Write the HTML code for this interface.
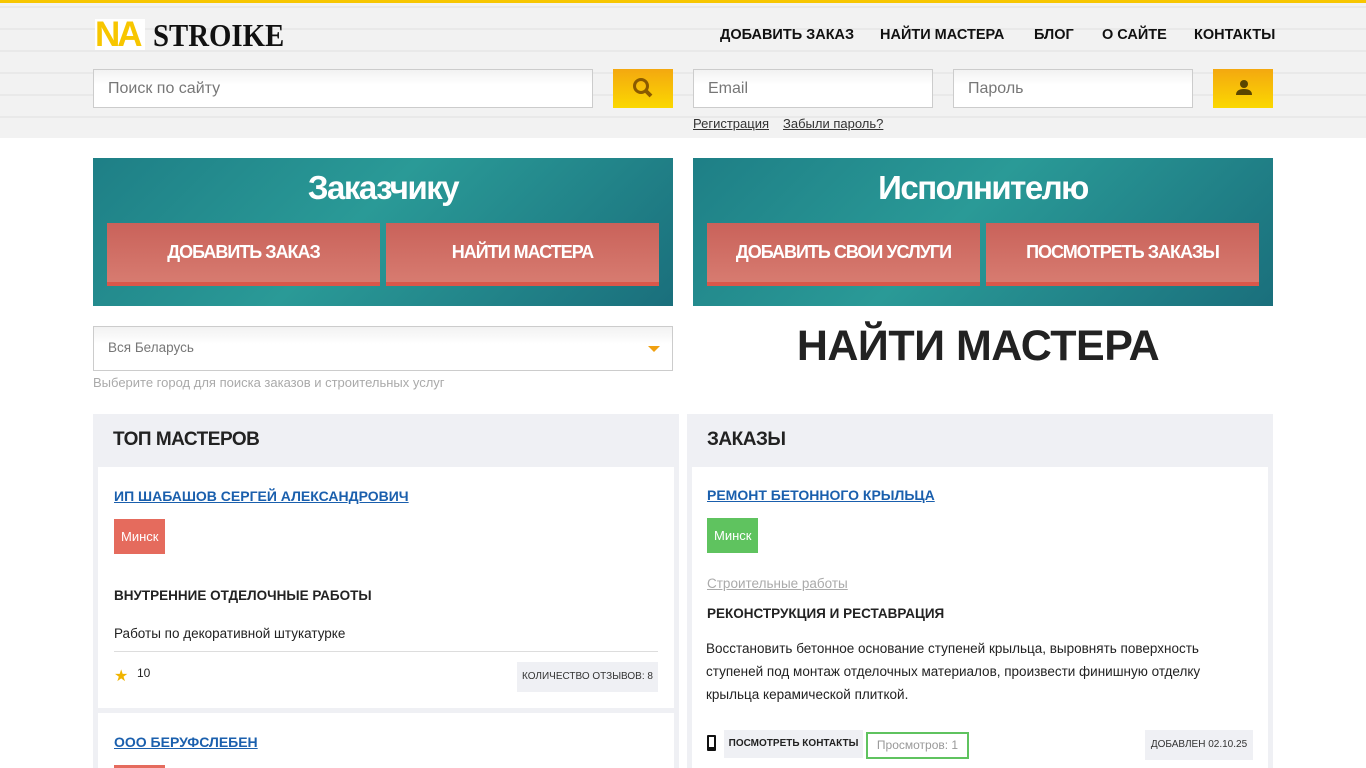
<!DOCTYPE html>
<html><head><meta charset="utf-8"><style>
*{box-sizing:border-box;margin:0;padding:0}
html,body{width:1366px;height:768px;overflow:hidden}
body{background:#fff;font-family:"Liberation Sans",sans-serif;color:#222;position:relative}
.a{position:absolute;white-space:nowrap}
.hdr{left:0;top:0;width:1366px;height:138px;background:#f2f2f2;border-top:3px solid #f7c600;
background-image:repeating-linear-gradient(0deg,transparent 0 20px,#e9e9e9 20px 22px)}
.nav{top:27px;font-size:14.5px;font-weight:bold;color:#111}
.inp{position:absolute;height:39px;border:1px solid #ccc;background:linear-gradient(#f2f2f2,#fff 40%);font-size:16px;color:#777;padding:10px 14px}
.ybtn{position:absolute;height:39px;width:60px;background:linear-gradient(#f4a810,#fbd800)}
.banner{top:158px;width:580px;height:148px;background:linear-gradient(135deg,#1e7f86,#2a9a97 45%,#1a6f7c)}
.banner h2{text-align:center;color:#fff;font-size:33px;font-weight:bold;letter-spacing:-1.5px;margin-top:11px}
.rb{position:absolute;top:65px;height:63px;width:273px;background:linear-gradient(#c9625a,#d77b70);border-bottom:4px solid #d9574a;color:#fff;font-weight:bold;font-size:18px;letter-spacing:-1px;text-align:center;line-height:58px}
.panel{top:414px;background:#eff0f4;height:354px}
.panel h3{font-size:19px;font-weight:bold;letter-spacing:-0.5px;padding:15px 20px;height:53px}
.card{position:absolute;background:#fff;overflow:hidden}
.lnk{color:#1a5fad;font-weight:bold;text-decoration:underline;font-size:14px}
.tag{position:absolute;color:#fff;font-size:13px;padding:0 7px;height:35px;line-height:35px}
.sm{font-size:13.5px}
</style></head><body>
<div class="a hdr"></div>
<div class="a" style="left:95px;top:19px;width:50px;height:31px;background:#fff;color:#f7c600;font:bold 35px 'Liberation Sans',sans-serif;line-height:31px;letter-spacing:-3px">NA</div>
<div class="a" style="left:153px;top:17px;font:bold 32px 'Liberation Serif',serif;color:#111;transform:scaleX(0.9);transform-origin:left">STROIKE</div>
<div class="a nav" style="left:720px">ДОБАВИТЬ ЗАКАЗ</div>
<div class="a nav" style="left:880px">НАЙТИ МАСТЕРА</div>
<div class="a nav" style="left:1034px">БЛОГ</div>
<div class="a nav" style="left:1102px">О САЙТЕ</div>
<div class="a nav" style="left:1194px">КОНТАКТЫ</div>
<div class="inp" style="left:93px;top:69px;width:500px">Поиск по сайту</div>
<div class="ybtn" style="left:613px;top:69px"><svg width="60" height="39"><circle cx="28" cy="17" r="6.5" fill="none" stroke="#8a5a00" stroke-width="3"/><line x1="33" y1="22" x2="38" y2="27" stroke="#8a5a00" stroke-width="4"/></svg></div>
<div class="inp" style="left:693px;top:69px;width:240px">Email</div>
<div class="inp" style="left:953px;top:69px;width:240px">Пароль</div>
<div class="ybtn" style="left:1213px;top:69px"><svg width="60" height="39"><circle cx="31" cy="15" r="4" fill="#5a4500"/><path d="M23 26 Q23 20 31 20 Q39 20 39 26Z" fill="#5a4500"/></svg></div>
<div class="a" style="left:693px;top:116px;font-size:13px;color:#333;text-decoration:underline">Регистрация</div>
<div class="a" style="left:783px;top:116px;font-size:13px;color:#333;text-decoration:underline">Забыли пароль?</div>

<div class="a banner" style="left:93px"><h2>Заказчику</h2>
<div class="rb" style="left:14px">ДОБАВИТЬ ЗАКАЗ</div><div class="rb" style="left:293px">НАЙТИ МАСТЕРА</div></div>
<div class="a banner" style="left:693px"><h2>Исполнителю</h2>
<div class="rb" style="left:14px">ДОБАВИТЬ СВОИ УСЛУГИ</div><div class="rb" style="left:293px">ПОСМОТРЕТЬ ЗАКАЗЫ</div></div>

<div class="inp" style="left:93px;top:326px;width:580px;height:45px;font-size:13.5px;padding:13px 14px;color:#777">Вся Беларусь<span style="position:absolute;right:12px;top:19px;border:6px solid transparent;border-top:6px solid #f0a010;border-bottom:0"></span></div>
<div class="a" style="left:93px;top:375px;font-size:13px;color:#aaa">Выберите город для поиска заказов и строительных услуг</div>
<div class="a" style="left:693px;width:570px;top:322px;text-align:center;font:bold 43px 'Liberation Sans',sans-serif;color:#222;letter-spacing:-0.5px">НАЙТИ МАСТЕРА</div>

<div class="a panel" style="left:93px;width:586px"><h3>ТОП МАСТЕРОВ</h3>
<div class="card" style="left:5px;top:53px;width:576px;height:241px">
<div class="a lnk" style="left:16px;top:21px">ИП ШАБАШОВ СЕРГЕЙ АЛЕКСАНДРОВИЧ</div>
<div class="tag" style="left:16px;top:52px;background:#e56b5d">Минск</div>
<div class="a" style="left:16px;top:121px;font-size:13.5px;font-weight:bold">ВНУТРЕННИЕ ОТДЕЛОЧНЫЕ РАБОТЫ</div>
<div class="a sm" style="left:16px;top:159px">Работы по декоративной штукатурке</div>
<div class="a" style="left:16px;top:184px;width:544px;border-top:1px solid #ddd"></div>
<div class="a" style="left:16px;top:199px;color:#f0b400;font-size:16px">★</div>
<div class="a" style="left:39px;top:199px;font-size:12px">10</div>
<div class="a" style="left:419px;top:195px;width:141px;height:30px;background:#eff0f4;font-size:10px;line-height:30px;text-align:center;color:#333">КОЛИЧЕСТВО ОТЗЫВОВ: 8</div>
</div>
<div class="card" style="left:5px;top:299px;width:576px;height:60px">
<div class="a lnk" style="left:16px;top:21px">ООО БЕРУФСЛЕБЕН</div>
<div class="tag" style="left:16px;top:52px;background:#e56b5d">Минск</div></div>
</div>

<div class="a panel" style="left:687px;width:586px"><h3>ЗАКАЗЫ</h3>
<div class="card" style="left:5px;top:53px;width:576px;height:320px">
<div class="a lnk" style="left:15px;top:20px">РЕМОНТ БЕТОННОГО КРЫЛЬЦА</div>
<div class="tag" style="left:15px;top:51px;background:#5fc35f">Минск</div>
<div class="a sm" style="left:15px;top:109px;color:#aaa;text-decoration:underline">Строительные работы</div>
<div class="a" style="left:15px;top:139px;font-size:13.5px;font-weight:bold">РЕКОНСТРУКЦИЯ И РЕСТАВРАЦИЯ</div>
<div class="a sm" style="left:14px;top:170px;width:525px;line-height:23px;white-space:normal">Восстановить бетонное основание ступеней крыльца, выровнять поверхность ступеней под монтаж отделочных материалов, произвести финишную отделку крыльца керамической плиткой.</div>
<div class="a" style="left:15px;top:268px;width:9px;height:16px;border:2px solid #111;border-bottom-width:4px;border-radius:1px"></div>
<div class="a" style="left:32px;top:263px;width:139px;height:28px;background:#eff0f4;font-size:10px;font-weight:bold;line-height:28px;text-align:center">ПОСМОТРЕТЬ КОНТАКТЫ</div>
<div class="a" style="left:174px;top:265px;width:103px;height:27px;border:2px solid #5fc35f;font-size:12px;color:#999;line-height:23px;text-align:center">Просмотров: 1</div>
<div class="a" style="left:453px;top:263px;width:108px;height:30px;background:#eff0f4;font-size:10px;line-height:30px;text-align:center;color:#333">ДОБАВЛЕН 02.10.25</div>
</div></div>
</body></html>
